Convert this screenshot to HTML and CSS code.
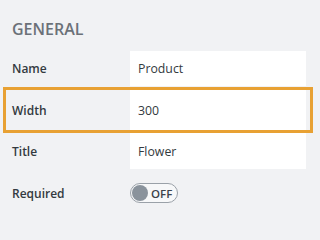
FILE: index.html
```html
<!DOCTYPE html>
<html>
<head>
<meta charset="utf-8">
<link rel="stylesheet" href="styles.css">
</head>
<body>
<div class="panel">
  <div class="section-title">GENERAL</div>
  <div class="row row-name">
    <div class="label">Name</div>
    <div class="field">Product</div>
  </div>
  <div class="row row-active">
    <div class="label">Width</div>
    <div class="field field-tall">300</div>
  </div>
  <div class="row row-title">
    <div class="label">Title</div>
    <div class="field">Flower</div>
  </div>
  <div class="row row-toggle">
    <div class="label">Required</div>
    <div class="toggle">
      <span class="knob"></span>
      <span class="toggle-text">OFF</span>
    </div>
  </div>
</div>
</body>
</html>
```
FILE: styles.css
```css
html, body {
  margin: 0;
  padding: 0;
  background: #f1f2f4;
}
body {
  width: 320px;
  height: 216px;
  overflow: hidden;
  font-family: "Open Sans", "Noto Sans", sans-serif;
}
.panel {
  display: flex;
  flex-direction: column;
}
.section-title {
  margin: 18px 0 11px 12px;
  height: 22px;
  line-height: 22px;
  font-size: 16px;
  font-weight: 600;
  color: #6b7178;
}
.row {
  display: flex;
  align-items: center;
  margin: 0 7px 0 3px;
  padding: 0 4px 0 6px;
  border-left: 3px solid transparent;
  border-right: 3px solid transparent;
}
.label {
  width: 118px;
  font-size: 12px;
  font-weight: 600;
  color: #333a40;
}
.field {
  flex: 1;
  height: 35px;
  display: flex;
  align-items: center;
  padding-left: 8px;
  background: #ffffff;
  font-size: 12.3px;
  color: #333a40;
}
.row-name {
  padding-bottom: 1px;
}
.row-active {
  border: 3px solid #e8a133;
}
.field-tall {
  height: 40px;
}
.row-title .field {
  height: 36px;
}
.row-toggle {
  padding-top: 14px;
}
.toggle {
  width: 45px;
  height: 18px;
  border: 1px solid #9aa1a8;
  border-radius: 10px;
  background: #f7f8f9;
  display: flex;
  align-items: center;
  padding-left: 1px;
  box-sizing: content-box;
}
.knob {
  width: 16px;
  height: 16px;
  border-radius: 50%;
  background: #8a939c;
}
.toggle-text {
  margin-left: 3px;
  font-size: 11.5px;
  font-weight: 600;
  color: #3c434a;
}
```
